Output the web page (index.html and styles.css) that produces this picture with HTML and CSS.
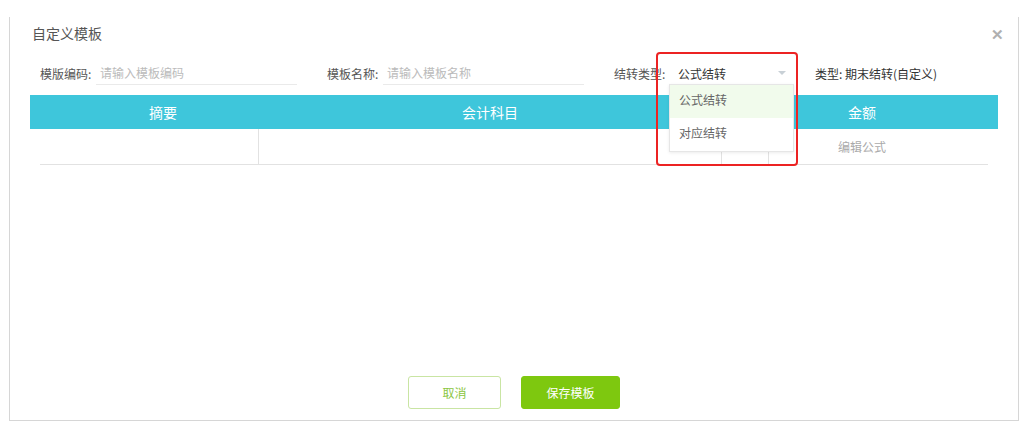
FILE: index.html
```html
<!DOCTYPE html>
<html lang="zh">
<head>
    <meta charset="UTF-8">
    <meta name="viewport" content="width=device-width, initial-scale=1.0">
    <title>自定义模板</title>
    <link rel="stylesheet" href="styles.css">
</head>
<body>
    <div class="dialog">
        <div class="dialog-head">
            <h1>自定义模板</h1>
            <span class="close">&#x2715;</span>
        </div>

        <div class="form-row">
            <div class="field">
                <label>模版编码:</label>
                <span class="input placeholder">请输入模板编码</span>
            </div>
            <div class="field">
                <label>模板名称:</label>
                <span class="input placeholder">请输入模板名称</span>
            </div>
            <div class="field field-select">
                <label>结转类型:</label>
                <div class="select">
                    <span>公式结转</span>
                    <span class="arrow"></span>
                    <!-- 下拉列表 -->
                    <ul class="dropdown">
                        <li class="active">公式结转</li>
                        <li>对应结转</li>
                    </ul>
                </div>
            </div>
            <div class="type-info">类型: 期末结转(自定义)</div>
        </div>

        <div class="table">
            <div class="thead">
                <div>摘要</div>
                <div>会计科目</div>
                <div></div>
                <div>金额</div>
            </div>
            <div class="tbody">
                <div class="cell"></div>
                <div class="cell"></div>
                <div class="cell"></div>
                <div class="cell muted">编辑公式</div>
                <div class="cell last"></div>
            </div>
        </div>

        <div class="dialog-foot">
            <a href="#" class="btn btn-ghost">取消</a>
            <a href="#" class="btn btn-primary">保存模板</a>
        </div>

        <!-- 标注框 -->
        <div class="highlight"></div>
    </div>
</body>
</html>
```

FILE: styles.css
```css
:root {
    --cyan: #3ec6db;
    --green: #7ec80f;
    --line: #e2e2e2;
    --text: #444;
}

* {
    box-sizing: border-box;
}

body {
    margin: 0;
    font-family: "Noto Sans CJK SC", "Liberation Sans", sans-serif;
    color: var(--text);
    background: #fff;
}

.dialog {
    position: relative;
    margin: 17px 0 0 9px;
    width: 1010px;
    height: 404px;
    border: 1px solid #d6d6d6;
    border-top: none;
    display: flex;
    flex-direction: column;
}

.dialog-head {
    display: flex;
    justify-content: space-between;
    align-items: center;
    height: 20px;
    margin-top: 6px;
    padding: 0 14px 0 22px;
}

.dialog-head h1 {
    margin: 0;
    font-size: 14px;
    font-weight: normal;
    color: #555;
}

.close {
    font-size: 15px;
    font-weight: bold;
    color: #b0b0b0;
}

.form-row {
    display: flex;
    align-items: center;
    height: 24px;
    margin-top: 18px;
    padding-left: 30px;
    font-size: 12px;
}

.field {
    display: flex;
    align-items: center;
    margin-right: 30px;
}

.field label {
    width: 56px;
    color: #555;
}

.input {
    width: 201px;
    height: 24px;
    line-height: 24px;
    padding-left: 4px;
    border-bottom: 1px solid #eaeaea;
}

.placeholder {
    color: #bbb;
}

.field-select label {
    width: 55px;
}

.select {
    position: relative;
    display: flex;
    justify-content: space-between;
    align-items: center;
    width: 125px;
    height: 24px;
    padding: 0 8px 0 9px;
    color: #333;
}

.arrow {
    width: 0;
    height: 0;
    border-left: 4px solid transparent;
    border-right: 4px solid transparent;
    border-top: 4px solid #c8d0d6;
}

.dropdown {
    position: absolute;
    top: 23px;
    left: 0;
    width: 125px;
    margin: 0;
    padding: 0;
    list-style: none;
    background: #fff;
    border: 1px solid #e6e6e6;
    box-shadow: 0 1px 3px rgba(0,0,0,0.08);
    z-index: 2;
}

.dropdown li {
    height: 33px;
    line-height: 30px;
    padding-left: 9px;
    color: #666;
}

.dropdown li.active {
    background: #f1fbec;
}

.type-info {
    margin-left: -9px;
    color: #333;
}

.table {
    margin-top: 10px;
    padding: 0 20px;
}

.thead {
    display: grid;
    grid-template-columns: 266px 388px 42px 272px;
    height: 34px;
    line-height: 34px;
    background: var(--cyan);
    color: #fff;
    font-size: 14px;
    text-align: center;
}

.tbody {
    display: grid;
    grid-template-columns: 219px 463px 47px 186px 33px;
    margin: 0 10px;
    height: 36px;
    border-bottom: 1px solid var(--line);
}

.cell {
    border-right: 1px solid var(--line);
    font-size: 12px;
    line-height: 36px;
    text-align: center;
}

.cell.last {
    border-right: none;
}

.cell.muted {
    color: #aaa;
    border-right: none;
}

.dialog-foot {
    display: flex;
    justify-content: center;
    gap: 20px;
    margin-top: auto;
    padding-bottom: 11px;
}

.btn {
    display: inline-block;
    height: 33px;
    line-height: 31px;
    border-radius: 3px;
    font-size: 12px;
    text-align: center;
    text-decoration: none;
}

.btn-ghost {
    width: 93px;
    border: 1px solid #c9e5a3;
    color: #8cc63f;
    background: #fff;
}

.btn-primary {
    width: 99px;
    border: 1px solid var(--green);
    background: var(--green);
    color: #fff;
}

.highlight {
    position: absolute;
    left: 646px;
    top: 35px;
    width: 142px;
    height: 114px;
    border: 2px solid #ec2323;
    border-radius: 4px;
    z-index: 3;
    pointer-events: none;
}
```
